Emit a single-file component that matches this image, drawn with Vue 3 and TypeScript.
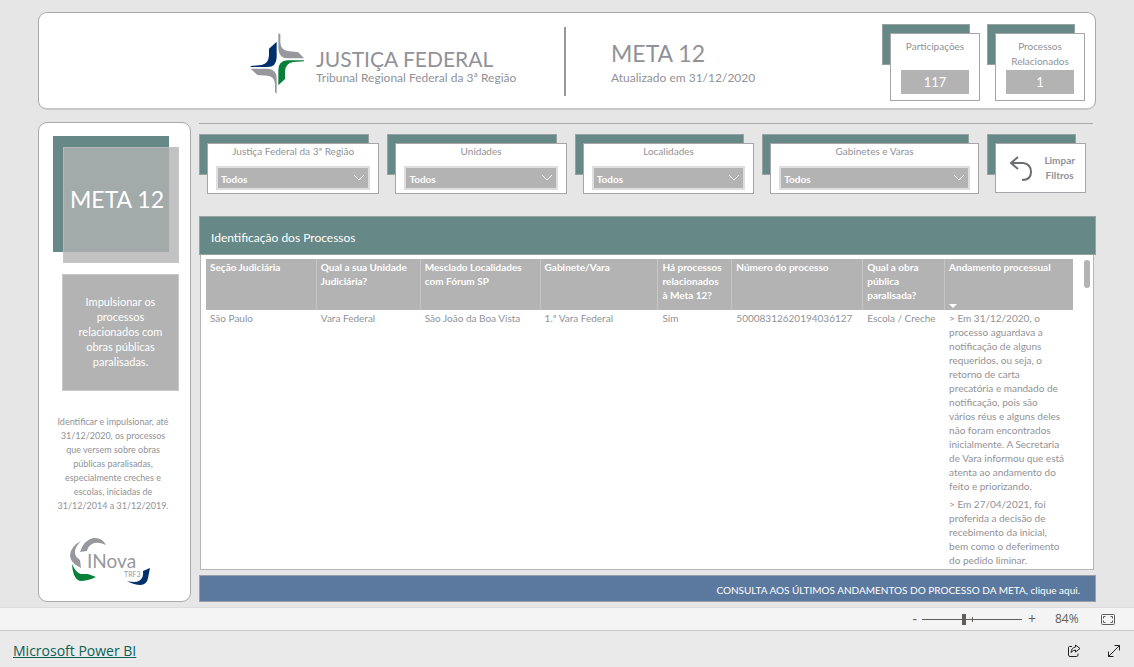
<script setup lang="ts">
import { ref } from 'vue'

interface Filter {
  id: string
  label: string
  grow: number
}

const counters = [
  { label: 'Participações', value: '117' },
  { label: 'Processos Relacionados', value: '1' },
]

const filters: Filter[] = [
  { id: 'justica', label: 'Justiça Federal da 3ª Região', grow: 180 },
  { id: 'unidades', label: 'Unidades', grow: 179 },
  { id: 'localidades', label: 'Localidades', grow: 179 },
  { id: 'gabinetes', label: 'Gabinetes e Varas', grow: 218 },
]

const columns = [
  { title: 'Seção Judiciária', width: 110 },
  { title: 'Qual a sua Unidade\nJudiciária?', width: 104 },
  { title: 'Mesclado Localidades\ncom Fórum SP', width: 120 },
  { title: 'Gabinete/Vara', width: 118 },
  { title: 'Há processos\nrelacionados\nà Meta 12?', width: 74 },
  { title: 'Número do processo', width: 131 },
  { title: 'Qual a obra\npública\nparalisada?', width: 82 },
  { title: 'Andamento processual', width: 129 },
]
const totalWidth = columns.reduce((sum, c) => sum + c.width, 0)

const row = [
  'São Paulo',
  'Vara Federal',
  'São João da Boa Vista',
  '1.ª Vara Federal',
  'Sim',
  '50008312620194036127',
  'Escola / Creche',
]

const progress = [
  '> Em 31/12/2020, o\nprocesso aguardava a\nnotificação de alguns\nrequeridos, ou seja, o\nretorno de carta\nprecatória e mandado de\nnotificação, pois são\nvários réus e alguns deles\nnão foram encontrados\ninicialmente. A Secretaria\nde Vara informou que está\natenta ao andamento do\nfeito e priorizando.',
  '> Em 27/04/2021, foi\nproferida a decisão de\nrecebimento da inicial,\nbem como o deferimento\ndo pedido liminar.',
]

const selected = ref<Record<string, string>>({
  justica: 'Todos',
  unidades: 'Todos',
  localidades: 'Todos',
  gabinetes: 'Todos',
})
const zoom = ref(84)

function clearFilters() {
  for (const f of filters) selected.value[f.id] = 'Todos'
}
</script>

<template>
  <div class="page">
    <main class="report">
      <header class="card top">
        <div class="brand">
          <svg class="jf" viewBox="60 68 165 183" aria-hidden="true">
            <path fill="#00306e" d="M140 94 L117 115 V135 Q116 160 95 164 L62 167 V170 H112 Q140 170 140 140 Z" />
            <path fill="#97989d" d="M145 69 V112 Q145 144 175 144 H222 L205 126 L172 122 Q152 119 151 95 V72 Z" />
            <path fill="#08803a" d="M222 150 H172 Q145 151 145 180 V225 L165 206 V184 Q166 158 190 155 L222 153 Z" />
            <path fill="#97989d" d="M62 175 H113 Q140 176 140 205 V250 L135 245 V222 Q134 198 112 196 L82 194 Z" />
          </svg>
          <div class="brand-text">
            <div class="brand-name">JUSTIÇA FEDERAL</div>
            <div class="brand-sub">Tribunal Regional Federal da 3ª Região</div>
          </div>
          <div class="divider"></div>
        </div>
        <div class="summary">
          <div class="heading">
            <h1>META 12</h1>
            <p>Atualizado em 31/12/2020</p>
          </div>
          <div class="counters">
            <div v-for="c in counters" :key="c.label" class="layered counter">
              <div class="sheet">
                <div class="counter-label">{{ c.label }}</div>
                <div class="counter-value">{{ c.value }}</div>
              </div>
            </div>
          </div>
        </div>
      </header>

      <div class="body">
        <aside class="card side">
          <div class="badge"><div class="badge-front">META 12</div></div>
          <div class="goal">Impulsionar os<br />processos<br />relacionados com<br />obras públicas<br />paralisadas.</div>
          <p class="about">Identificar e impulsionar, até<br />31/12/2020, os processos<br />que versem sobre obras<br />públicas paralisadas,<br />especialmente creches e<br />escolas, iniciadas de<br />31/12/2014 a 31/12/2019.</p>
          <svg class="inova" viewBox="0 0 82 48" role="img" aria-label="INova TRF3">
            <path fill="#97989d" d="M11 15 Q15 3 24 1 Q33 0 37 8 Q28 4 23 7 Q19 9 18 14 Z" />
            <path fill="#97989d" d="M12 4 Q2 9 1 18 Q1 26 12 31 L11 23 Q5 19 6 14 Q7 9 12 4 Z" />
            <path fill="#08803a" d="M3 27 Q7 36 12 37 L19 37 L27 40 Q19 44 11 44 Q4 42 3 27 Z" />
            <path fill="#00306e" d="M81 31 L74 34 Q75 41 70 44 Q66 46 58 44 Q65 48 72 48 Q78 47 79 41 Z" />
            <text x="18" y="31" class="inova-name">INova</text>
            <text x="55" y="40" class="inova-sub">TRF3</text>
          </svg>
        </aside>

        <section class="content">
          <hr />
          <div class="filters">
            <div v-for="f in filters" :key="f.id" class="layered filter" :style="{ flexGrow: f.grow }">
              <div class="sheet">
                <label :for="f.id">{{ f.label }}</label>
                <div class="select-wrap">
                  <select :id="f.id" v-model="selected[f.id]">
                    <option>Todos</option>
                  </select>
                  <svg viewBox="0 0 12 8" aria-hidden="true"><path d="M1 1 L6 6 L11 1" fill="none" stroke="#fff" /></svg>
                </div>
              </div>
            </div>
            <div class="layered reset">
              <button class="sheet" type="button" @click="clearFilters">
                <svg viewBox="0 0 24 27" aria-hidden="true">
                  <path d="M9 2 L2 8 L9 14 M2 8 H14 Q22 9 22 17 Q22 25 13 25" fill="none" stroke="#6d6e71" stroke-width="2" />
                </svg>
                <span>Limpar<br />Filtros</span>
              </button>
            </div>
          </div>

          <h2>Identificação dos Processos</h2>
          <div class="table-box">
            <div class="scroller">
              <table>
                <colgroup>
                  <col v-for="c in columns" :key="c.title" :style="{ width: (c.width / totalWidth) * 100 + '%' }" />
                </colgroup>
                <thead>
                  <tr>
                    <th v-for="(c, i) in columns" :key="c.title" scope="col">
                      {{ c.title }}<i v-if="i === columns.length - 1" class="sort"></i>
                    </th>
                  </tr>
                </thead>
                <tbody>
                  <tr>
                    <td v-for="cell in row" :key="cell">{{ cell }}</td>
                    <td><p v-for="p in progress" :key="p">{{ p }}</p></td>
                  </tr>
                </tbody>
              </table>
            </div>
            <div class="bar"></div>
          </div>
          <a class="consult" href="#">CONSULTA AOS ÚLTIMOS ANDAMENTOS DO PROCESSO DA META, clique aqui.</a>
        </section>
      </div>
    </main>

    <div class="zoombar">
      <button type="button" aria-label="Reduzir">-</button>
      <div class="range">
        <input v-model.number="zoom" type="range" min="0" max="200" aria-label="Zoom" />
        <i></i>
      </div>
      <button type="button" aria-label="Ampliar">+</button>
      <span class="percent">{{ zoom }}%</span>
      <button type="button" class="fit" aria-label="Ajustar à página">
        <svg width="14" height="11" viewBox="0 0 14 11" fill="none" stroke="#605e5c">
          <rect x="0.5" y="0.5" width="13" height="10" rx="1" />
          <path d="M2.5 4.5 V2.5 H4.5 M9.5 2.5 H11.5 V4.5 M11.5 6.5 V8.5 H9.5 M4.5 8.5 H2.5 V6.5" />
        </svg>
      </button>
    </div>

    <footer>
      <a href="#">Microsoft Power BI</a>
      <div class="actions">
        <button type="button" aria-label="Compartilhar">
          <svg width="14" height="14" viewBox="0 0 14 14" fill="none" stroke="#252423">
            <path d="M5 2.5 H2.5 Q1.5 2.5 1.5 3.5 V11 Q1.5 12.5 3 12.5 H9.5 Q11 12.5 11 11 V9.5" />
            <path d="M8.5 1 L13 4.5 L8.5 8 V6 Q6 6 4 8.5 Q4.5 3.5 8.5 3 Z" />
          </svg>
        </button>
        <button type="button" aria-label="Tela inteira">
          <svg width="14" height="14" viewBox="0 0 14 14" fill="none" stroke="#252423">
            <path d="M1.5 12.5 L12.5 1.5 M7.5 1.5 H12.5 V6.5 M1.5 7.5 V12.5 H6.5" />
          </svg>
        </button>
      </div>
    </footer>
  </div>
</template>

<style>
body {
  margin: 0;
}
</style>

<style scoped>
* {
  box-sizing: border-box;
}
.page {
  display: flex;
  flex-direction: column;
  height: 100vh;
  background: #e6e6e6;
  color: #919297;
  font-family: Lato, 'Liberation Sans', sans-serif;
  font-size: 10px;
  line-height: 14px;
}
p,
h1,
h2 {
  margin: 0;
  font-weight: 400;
}
button {
  font-family: inherit;
  cursor: pointer;
}
.report {
  flex: 1;
  min-height: 0;
  display: flex;
  flex-direction: column;
  gap: 12px;
  padding: 12px 38px 5px;
}
.card {
  background: #fff;
  border: 1px solid #a9a9ac;
  border-radius: 9px;
}
.top {
  flex: none;
  display: grid;
  grid-template-columns: 1fr 1fr;
  height: 98px;
  border-bottom: 2px solid #c8c8c8;
}
.brand {
  display: flex;
  align-items: center;
  justify-content: flex-end;
}
.jf {
  width: 55px;
  height: 61px;
  margin: 6px 11px 0 0;
}
.brand-text {
  min-width: 206px;
  padding-top: 10px;
}
.brand-name {
  font-size: 21px;
  line-height: 24px;
}
.brand-sub {
  font-size: 12px;
  line-height: 14px;
}
.divider {
  width: 2px;
  height: 69px;
  margin: 2px 1px 0 42px;
  background: #97989d;
}
.summary {
  display: flex;
  justify-content: space-between;
  padding: 11px 10px 0 44px;
}
.heading {
  padding-top: 14px;
}
h1 {
  font-size: 23px;
  line-height: 30px;
}
.heading p {
  font-size: 12px;
  line-height: 20px;
}
.counters {
  display: flex;
  gap: 7px;
}
.layered {
  position: relative;
  padding: 9px 0 0 8px;
}
.layered::before {
  content: '';
  position: absolute;
  top: 0;
  left: 0;
  right: 10px;
  height: 39px;
  background: #668886;
  border: 1px solid #97a3a3;
}
.sheet {
  position: relative;
  background: #fff;
  border: 1px solid #a5a5aa;
}
.counter {
  width: 98px;
}
.counter .sheet {
  display: flex;
  flex-direction: column;
  justify-content: space-between;
  height: 68px;
  padding: 5px 10px 6px;
  text-align: center;
}
.counter-label {
  line-height: 15px;
}
.counter-value {
  background: #b3b3b3;
  color: #fff;
  font-size: 13px;
  line-height: 24px;
}
.body {
  flex: 1;
  min-height: 0;
  display: grid;
  grid-template-columns: 153px 1fr;
  gap: 8px;
}
.side {
  display: flex;
  flex-direction: column;
  align-items: center;
  padding: 13px 11px 16px 14px;
}
.badge {
  align-self: flex-start;
  width: 116px;
  height: 116px;
  padding: 11px 0 0 10px;
  background: #668886;
}
.badge-front {
  width: 116px;
  height: 116px;
  padding-right: 8px;
  background: rgba(179, 179, 179, 0.8);
  border: 1px solid rgba(200, 200, 200, 0.5);
  color: #fff;
  font-size: 23px;
  line-height: 102px;
  text-align: center;
}
.goal {
  align-self: flex-end;
  width: 117px;
  height: 117px;
  margin-top: 22px;
  padding-top: 19px;
  background: #b3b3b3;
  border: 1px solid #c8c8c8;
  color: #fff;
  font-size: 11px;
  line-height: 15px;
  text-align: center;
}
.about {
  margin-top: 24px;
  margin-right: 6px;
  font-size: 9px;
  text-align: center;
  white-space: nowrap;
}
.inova {
  width: 82px;
  height: 48px;
  margin-top: auto;
  margin-right: 13px;
}
.inova-name {
  font-size: 19px;
  fill: #97989d;
}
.inova-sub {
  font-size: 7px;
  fill: #97989d;
}
.content {
  display: flex;
  flex-direction: column;
  min-width: 0;
  min-height: 0;
}
hr {
  flex: none;
  height: 1px;
  margin: 1px 3px 10px 0;
  border: 0;
  background: #a9a9ac;
}
.filters {
  display: flex;
  gap: 8px;
  padding-right: 10px;
}
.filter {
  flex-basis: 0;
  min-width: 0;
}
.filter .sheet {
  display: flex;
  flex-direction: column;
  height: 51px;
  padding: 0 8px 3px;
}
.filter label {
  line-height: 15px;
  text-align: center;
}
.select-wrap {
  position: relative;
  margin-top: auto;
}
select {
  display: block;
  width: 100%;
  height: 24px;
  padding: 2px 3px 0;
  appearance: none;
  background: #b3b3b3;
  border: 2px solid #dedede;
  border-radius: 0;
  color: #fff;
  font-family: inherit;
  font-size: 10px;
  font-weight: 700;
}
.select-wrap svg {
  position: absolute;
  top: 8px;
  right: 5px;
  width: 12px;
  height: 8px;
  pointer-events: none;
}
.reset {
  flex: none;
  width: 99px;
}
.reset .sheet {
  display: flex;
  align-items: center;
  justify-content: space-between;
  width: 100%;
  height: 50px;
  padding: 0 10px 0 13px;
  color: #919297;
  font-size: 10px;
  font-weight: 700;
  line-height: 15px;
}
.reset svg {
  width: 24px;
  height: 27px;
}
h2 {
  flex: none;
  height: 39px;
  margin-top: 22px;
  padding: 3px 11px 0;
  background: #668886;
  border: 1px solid #97a3a3;
  color: #fff;
  font-size: 12px;
  line-height: 36px;
}
.table-box {
  flex: 1;
  min-height: 0;
  display: flex;
  justify-content: space-between;
  margin: 0 2px 5px 1px;
  padding: 4px 3px 3px 5px;
  background: #fff;
  border: 1px solid #b5b5ba;
  border-top: 0;
}
.scroller {
  flex: 1;
  overflow: hidden;
}
.bar {
  width: 6px;
  height: 28px;
  margin: 1px 0 0 11px;
  border-radius: 3px;
  background: #b3b3b3;
}
table {
  width: 100%;
  table-layout: fixed;
  border-collapse: separate;
  border-spacing: 0;
}
th,
td {
  padding: 1px 0 0 4px;
  text-align: left;
  vertical-align: top;
  white-space: pre-line;
}
th {
  position: relative;
  height: 51px;
  background: #b3b3b3;
  color: #fff;
  font-weight: 700;
}
th + th {
  border-left: 1px solid #c6c6c6;
}
td + td {
  padding-left: 5px;
}
.sort {
  position: absolute;
  left: 4px;
  bottom: 2px;
  border: 4px solid transparent;
  border-top-color: #fff;
  border-bottom: 0;
}
td p + p {
  margin-top: 4px;
}
.consult {
  flex: none;
  height: 27px;
  padding: 2px 15px 0;
  background: #5b789f;
  border: 1px solid #9a9ea8;
  color: #fff;
  font-size: 10px;
  line-height: 24px;
  text-align: right;
  text-decoration: none;
}
.zoombar {
  flex: none;
  display: flex;
  align-items: center;
  justify-content: flex-end;
  height: 24px;
  padding-right: 19px;
  background: #f4f4f4;
  border-top: 1px solid #dcdcdc;
  border-bottom: 1px solid #c8c8c8;
  color: #605e5c;
  font-family: 'Open Sans', sans-serif;
}
.zoombar button,
.actions button {
  display: flex;
  padding: 0;
  border: 0;
  background: none;
  color: inherit;
  font-size: 14px;
  line-height: 20px;
}
.range {
  position: relative;
  display: flex;
  width: 100px;
  margin: 0 6px 0 5px;
}
.range input {
  width: 100%;
  height: 12px;
  margin: 0;
  appearance: none;
  background: linear-gradient(#605e5c, #605e5c) center / 100% 1px no-repeat;
}
.range input::-webkit-slider-thumb {
  appearance: none;
  width: 4px;
  height: 11px;
  background: #605e5c;
}
.range i {
  position: absolute;
  left: 50%;
  top: 4px;
  width: 1px;
  height: 5px;
  background: #605e5c;
}
.percent {
  width: 23px;
  margin: 0 23px 0 19px;
  font-size: 12px;
}
footer {
  flex: none;
  display: flex;
  align-items: center;
  justify-content: space-between;
  height: 36px;
  padding: 3px 13px 0;
  background: #eaeaea;
}
footer a {
  color: #0b6157;
  font-family: 'Open Sans', sans-serif;
  font-size: 14px;
  line-height: 20px;
}
.actions {
  display: flex;
  gap: 26px;
}
</style>
